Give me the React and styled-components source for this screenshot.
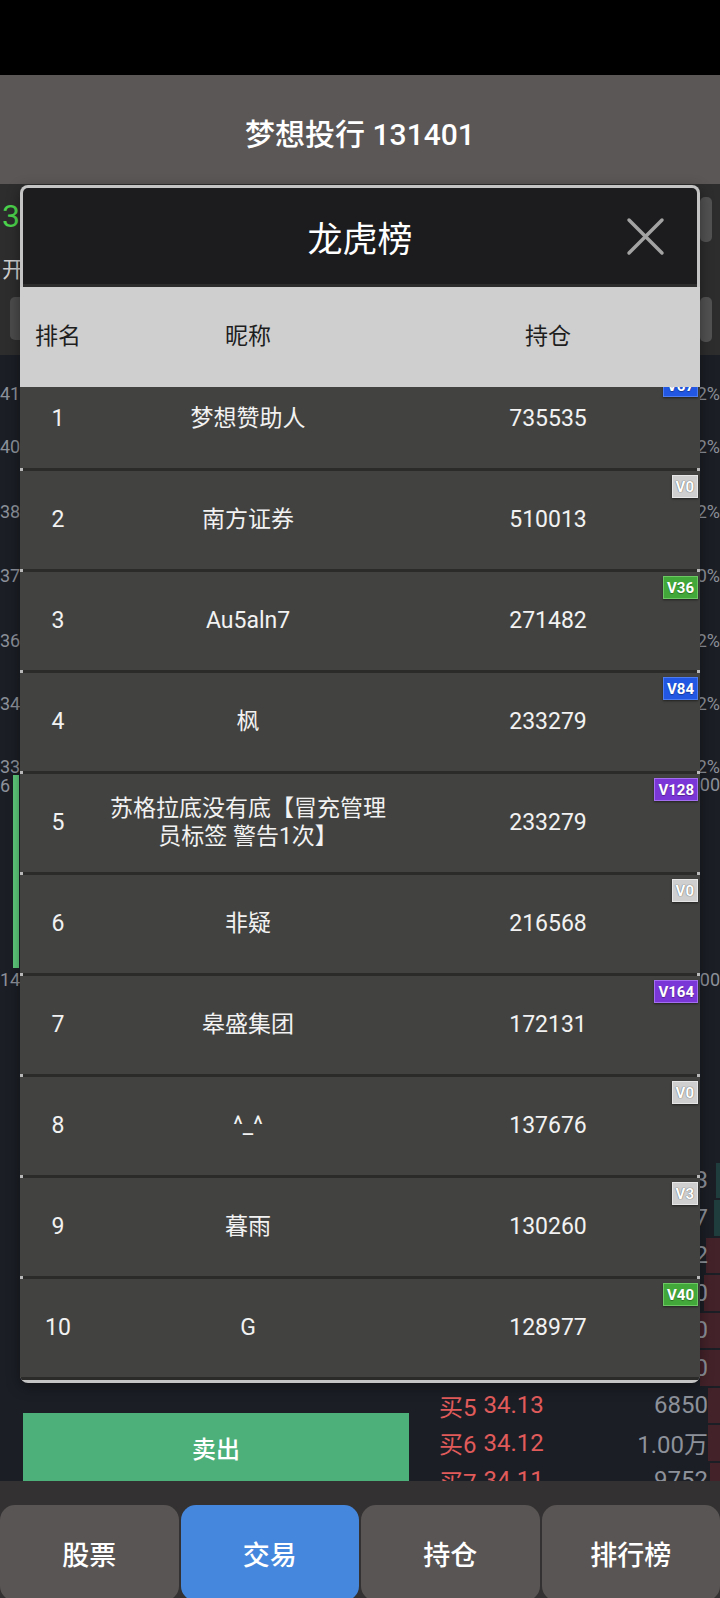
import React from "react";
import styled, { createGlobalStyle } from "styled-components";

const GlobalStyle = createGlobalStyle`
  html, body { margin: 0; padding: 0; background: #1b1e25; }
  body { font-family: Roboto, "Noto Sans CJK SC", "Noto Sans", sans-serif; }
  * { box-sizing: border-box; }
`;

const Screen = styled.div`
  position: relative;
  width: 720px;
  height: 1598px;
  overflow: hidden;
  display: flex;
  flex-direction: column;
  background: #1b1e25;
`;

const StatusBar = styled.div`
  flex: none;
  height: 75px;
  background: #000;
`;

const TitleBar = styled.header`
  flex: none;
  height: 109px;
  padding-top: 5px;
  background: #5b5756;
  display: flex;
  align-items: center;
  justify-content: center;
  color: #fff;
  font-size: 30px;
  font-weight: 500;
`;

/* ---------- background page ---------- */

const InfoPanel = styled.section`
  flex: none;
  height: 171px;
  background: #2d2d2d;
  display: flex;
  justify-content: space-between;
  overflow: hidden;
`;

const InfoLeft = styled.div`
  display: flex;
  flex-direction: column;
  padding: 14px 0 0 2px;
`;

const BigPrice = styled.div`
  font-size: 32px;
  line-height: 36px;
  color: #4cd44c;
  white-space: nowrap;
`;

const InfoLabel = styled.div`
  margin-top: 24px;
  font-size: 22px;
  line-height: 24px;
  color: #cfcfcf;
`;

const InfoField = styled.div`
  margin: 15px 0 0 8px;
  width: 14px;
  height: 43px;
  border-radius: 5px 0 0 5px;
  background: #4b4b4b;
`;

const InfoRight = styled.div`
  display: flex;
  flex-direction: column;
  gap: 55px;
  padding: 13px 8px 0 0;
`;

const InfoBox = styled.div`
  width: 12px;
  height: 45px;
  border-radius: 5px;
  background: #525252;
`;

const Chart = styled.section`
  flex: none;
  height: 635px;
  background: #1b1e25;
  display: flex;
  flex-direction: column;
`;

const PriceArea = styled.div`
  height: 415px;
  display: flex;
  justify-content: space-between;
`;

const AxisCol = styled.div`
  display: flex;
  flex-direction: column;
  align-items: ${(p) => (p.$right ? "flex-end" : "flex-start")};
  padding-top: 29px;
`;

const AxisLabel = styled.div`
  margin-top: ${(p) => p.$mt}px;
  font-size: 18px;
  line-height: 20px;
  color: #8d919a;
  white-space: nowrap;
`;

const VolumeArea = styled.div`
  height: 220px;
  display: flex;
  justify-content: space-between;
`;

const VolLeft = styled.div`
  display: flex;
`;

const VolLabels = styled.div`
  width: 13px;
  display: flex;
  flex-direction: column;
  justify-content: space-between;
  padding-top: 6px;
`;

const VolBar = styled.div`
  width: 6px;
  height: 193px;
  margin-top: 5px;
  background: #5fcb7c;
`;

const VolRight = styled.div`
  display: flex;
  flex-direction: column;
  justify-content: space-between;
  align-items: flex-end;
  padding-top: 5px;
`;

const Trade = styled.section`
  flex: none;
  height: 491px;
  overflow: hidden;
  display: grid;
  grid-template-columns: 386px 1fr;
  grid-template-rows: minmax(0, 1fr);
  column-gap: 30px;
  padding-left: 23px;
`;

const ActionCol = styled.div`
  display: flex;
  flex-direction: column;
  justify-content: flex-end;
  gap: 44px;
`;

const ActionButton = styled.div`
  flex: none;
  height: 68px;
  display: flex;
  align-items: center;
  justify-content: center;
  background: ${(p) => (p.$sell ? "#4daf7a" : "#e0575b")};
  color: #fff;
  font-size: 24px;
  font-weight: 500;
`;

const Book = styled.div`
  min-height: 0;
  overflow: hidden;
  display: flex;
  flex-direction: column;
  padding-top: 171.5px;
`;

const BookRow = styled.div`
  position: relative;
  flex: none;
  height: 37.5px;
  display: grid;
  grid-template-columns: auto auto 1fr;
  column-gap: 7px;
  align-items: center;
  padding-right: 12px;
  font-size: 24px;
`;

const DepthBar = styled.div`
  position: absolute;
  right: 0;
  top: 1px;
  bottom: 1px;
  background: ${(p) => (p.$buy ? "rgba(110, 38, 48, 0.5)" : "rgba(40, 100, 90, 0.45)")};
`;

const BookText = styled.span`
  position: relative;
  color: ${(p) => p.$color};
  text-align: ${(p) => (p.$right ? "right" : "left")};
  white-space: nowrap;
`;

const Nav = styled.nav`
  flex: none;
  height: 117px;
  padding-top: 24px;
  background: #333131;
  display: grid;
  grid-template-columns: repeat(4, 1fr);
  column-gap: 2px;
  overflow: hidden;
`;

const Tab = styled.div`
  height: 96px;
  border-radius: 15px;
  background: ${(p) => (p.$active ? "#4587dd" : "#595554")};
  color: #fff;
  font-size: 27px;
  font-weight: 500;
  display: flex;
  align-items: center;
  justify-content: center;
`;

/* ---------- modal ---------- */

const Modal = styled.div`
  position: absolute;
  top: 185px;
  left: 20px;
  width: 680px;
  height: 1198px;
  background: #c4c4c4;
  border-radius: 8px;
  overflow: hidden;
  display: flex;
  flex-direction: column;
  padding: 3px 0;
  box-shadow: 0 4px 14px rgba(0, 0, 0, 0.4);
`;

const DialogHeader = styled.div`
  flex: none;
  height: 99px;
  margin: 0 3px;
  border-radius: 5px 5px 0 0;
  background: #1c1c1e;
  border-bottom: 3px solid #2c2c2c;
  display: grid;
  grid-template-columns: 1fr auto 1fr;
  align-items: center;
`;

const DialogTitle = styled.h2`
  grid-column: 2;
  margin: 0;
  color: #fff;
  font-size: 35px;
  font-weight: 400;
`;

const CloseButton = styled.div`
  grid-column: 3;
  justify-self: end;
  margin-right: 32px;
  width: 39px;
  height: 39px;
  display: flex;
`;

const ColumnHeader = styled.div`
  flex: none;
  height: 100px;
  background: #cfcfcf;
  display: grid;
  grid-template-columns: 76px 304px 296px;
  align-items: center;
  color: #1e1e1e;
  font-size: 23px;
`;

const Cell = styled.div`
  text-align: center;
  padding: 0 10px;
  line-height: 28px;
`;

const ListViewport = styled.div`
  flex: none;
  height: 993px;
  overflow: hidden;
  background: #2b2c2a;
`;

const List = styled.div`
  margin-top: -17px;
  display: flex;
  flex-direction: column;
  gap: 3px;
`;

const Row = styled.div`
  position: relative;
  flex: none;
  height: 98px;
  background: #424341;
  display: grid;
  grid-template-columns: 76px 304px 296px;
  align-items: center;
  color: #f2f2f2;
  font-size: 23px;

  &::before,
  &::after {
    content: "";
    position: absolute;
    top: -3px;
    width: 3px;
    height: 3px;
    background: #b8b8b8;
  }
  &::before { left: 0; }
  &::after { right: 0; }
`;

const badgeTones = {
  grey: { bg: "#cfcfcf", border: "#e6e6e6", shadow: "0 0 1px #6d6d6d, 0 0 1px #6d6d6d" },
  green: { bg: "#43a83a", border: "#6cc862", shadow: "0 1px 1px rgba(0,0,0,0.35)" },
  blue: { bg: "#2157e3", border: "#4c7cf0", shadow: "0 1px 1px rgba(0,0,0,0.35)" },
  purple: { bg: "#7a36d6", border: "#a36ff0", shadow: "0 1px 1px rgba(0,0,0,0.35)" },
};

const Badge = styled.span`
  position: absolute;
  top: 4px;
  right: 2px;
  height: 23px;
  padding: 0 3px;
  display: flex;
  align-items: center;
  font-size: 15px;
  font-weight: 700;
  color: #fff;
  background: ${(p) => badgeTones[p.$tone].bg};
  border: 1px solid ${(p) => badgeTones[p.$tone].border};
  text-shadow: ${(p) => badgeTones[p.$tone].shadow};
  box-shadow: 0 1px 2px rgba(0, 0, 0, 0.5);
`;

/* ---------- data ---------- */

const leftAxis = [
  { t: "41.20", mt: 0 },
  { t: "40.09", mt: 33 },
  { t: "38.98", mt: 45 },
  { t: "37.87", mt: 44 },
  { t: "36.76", mt: 45 },
  { t: "34.65", mt: 43 },
  { t: "33.54", mt: 43 },
];
const rightAxis = ["9.02%", "6.02%", "3.02%", "0.00%", "3.02%", "6.02%", "9.02%"];

const book = [
  { l: "卖2", p: "34.19", v: "2683", buy: false, w: 4 },
  { l: "卖1", p: "34.18", v: "5217", buy: false, w: 6 },
  { l: "买1", p: "34.17", v: "8532", buy: true, w: 14 },
  { l: "买2", p: "34.16", v: "3150", buy: true, w: 16 },
  { l: "买3", p: "34.15", v: "1200", buy: true, w: 20 },
  { l: "买4", p: "34.14", v: "7600", buy: true, w: 20 },
  { l: "买5", p: "34.13", v: "6850", buy: true, w: 12 },
  { l: "买6", p: "34.12", v: "1.00万", buy: true, w: 12 },
  { l: "买7", p: "34.11", v: "9752", buy: true, w: 10 },
];

const ranking = [
  { n: "梦想赞助人", h: "735535", v: "V67", tone: "blue" },
  { n: "南方证券", h: "510013", v: "V0", tone: "grey" },
  { n: "Au5aln7", h: "271482", v: "V36", tone: "green" },
  { n: "枫", h: "233279", v: "V84", tone: "blue" },
  { n: "苏格拉底没有底【冒充管理员标签 警告1次】", h: "233279", v: "V128", tone: "purple" },
  { n: "非疑", h: "216568", v: "V0", tone: "grey" },
  { n: "皋盛集团", h: "172131", v: "V164", tone: "purple" },
  { n: "^_^", h: "137676", v: "V0", tone: "grey" },
  { n: "暮雨", h: "130260", v: "V3", tone: "grey" },
  { n: "G", h: "128977", v: "V40", tone: "green" },
];

const tabs = ["股票", "交易", "持仓", "排行榜"];

export default function App() {
  return (
    <>
      <GlobalStyle />
      <Screen>
        <StatusBar />
        <TitleBar>梦想投行 131401</TitleBar>

        <InfoPanel>
          <InfoLeft>
            <BigPrice>34.13</BigPrice>
            <InfoLabel>开</InfoLabel>
            <InfoField />
          </InfoLeft>
          <InfoRight>
            <InfoBox />
            <InfoBox />
          </InfoRight>
        </InfoPanel>

        <Chart>
          <PriceArea>
            <AxisCol>
              {leftAxis.map((a) => (
                <AxisLabel key={a.t} $mt={a.mt}>{a.t}</AxisLabel>
              ))}
            </AxisCol>
            <AxisCol $right>
              {rightAxis.map((t, i) => (
                <AxisLabel key={i} $mt={leftAxis[i].mt}>{t}</AxisLabel>
              ))}
            </AxisCol>
          </PriceArea>
          <VolumeArea>
            <VolLeft>
              <VolLabels>
                <AxisLabel $mt={0}>6</AxisLabel>
                <AxisLabel $mt={0}>14:30</AxisLabel>
              </VolLabels>
              <VolBar />
            </VolLeft>
            <VolRight>
              <AxisLabel $mt={0}>1000</AxisLabel>
              <AxisLabel $mt={0}>15:00</AxisLabel>
            </VolRight>
          </VolumeArea>
        </Chart>

        <Trade>
          <ActionCol>
            <ActionButton>买入</ActionButton>
            <ActionButton $sell>卖出</ActionButton>
          </ActionCol>
          <Book>
            {book.map((r) => (
              <BookRow key={r.l}>
                <DepthBar $buy={r.buy} style={{ width: `${r.w}px` }} />
                <BookText $color={r.buy ? "#e15b5b" : "#4cbf7a"}>{r.l}</BookText>
                <BookText $color="#e15b5b">{r.p}</BookText>
                <BookText $color="#8d919a" $right>{r.v}</BookText>
              </BookRow>
            ))}
          </Book>
        </Trade>

        <Nav>
          {tabs.map((t) => (
            <Tab key={t} $active={t === "交易"}>{t}</Tab>
          ))}
        </Nav>

        <Modal>
          <DialogHeader>
            <DialogTitle>龙虎榜</DialogTitle>
            <CloseButton>
              <svg width="39" height="39" viewBox="0 0 39 39">
                <path d="M3 3 L36 36 M36 3 L3 36" stroke="#a3a3a3" strokeWidth="3.5" strokeLinecap="round" fill="none" />
              </svg>
            </CloseButton>
          </DialogHeader>
          <ColumnHeader>
            <Cell>排名</Cell>
            <Cell>昵称</Cell>
            <Cell>持仓</Cell>
          </ColumnHeader>
          <ListViewport>
            <List>
              {ranking.map((r, i) => (
                <Row key={i}>
                  <Cell>{i + 1}</Cell>
                  <Cell>{r.n}</Cell>
                  <Cell>{r.h}</Cell>
                  <Badge $tone={r.tone}>{r.v}</Badge>
                </Row>
              ))}
            </List>
          </ListViewport>
        </Modal>
      </Screen>
    </>
  );
}
